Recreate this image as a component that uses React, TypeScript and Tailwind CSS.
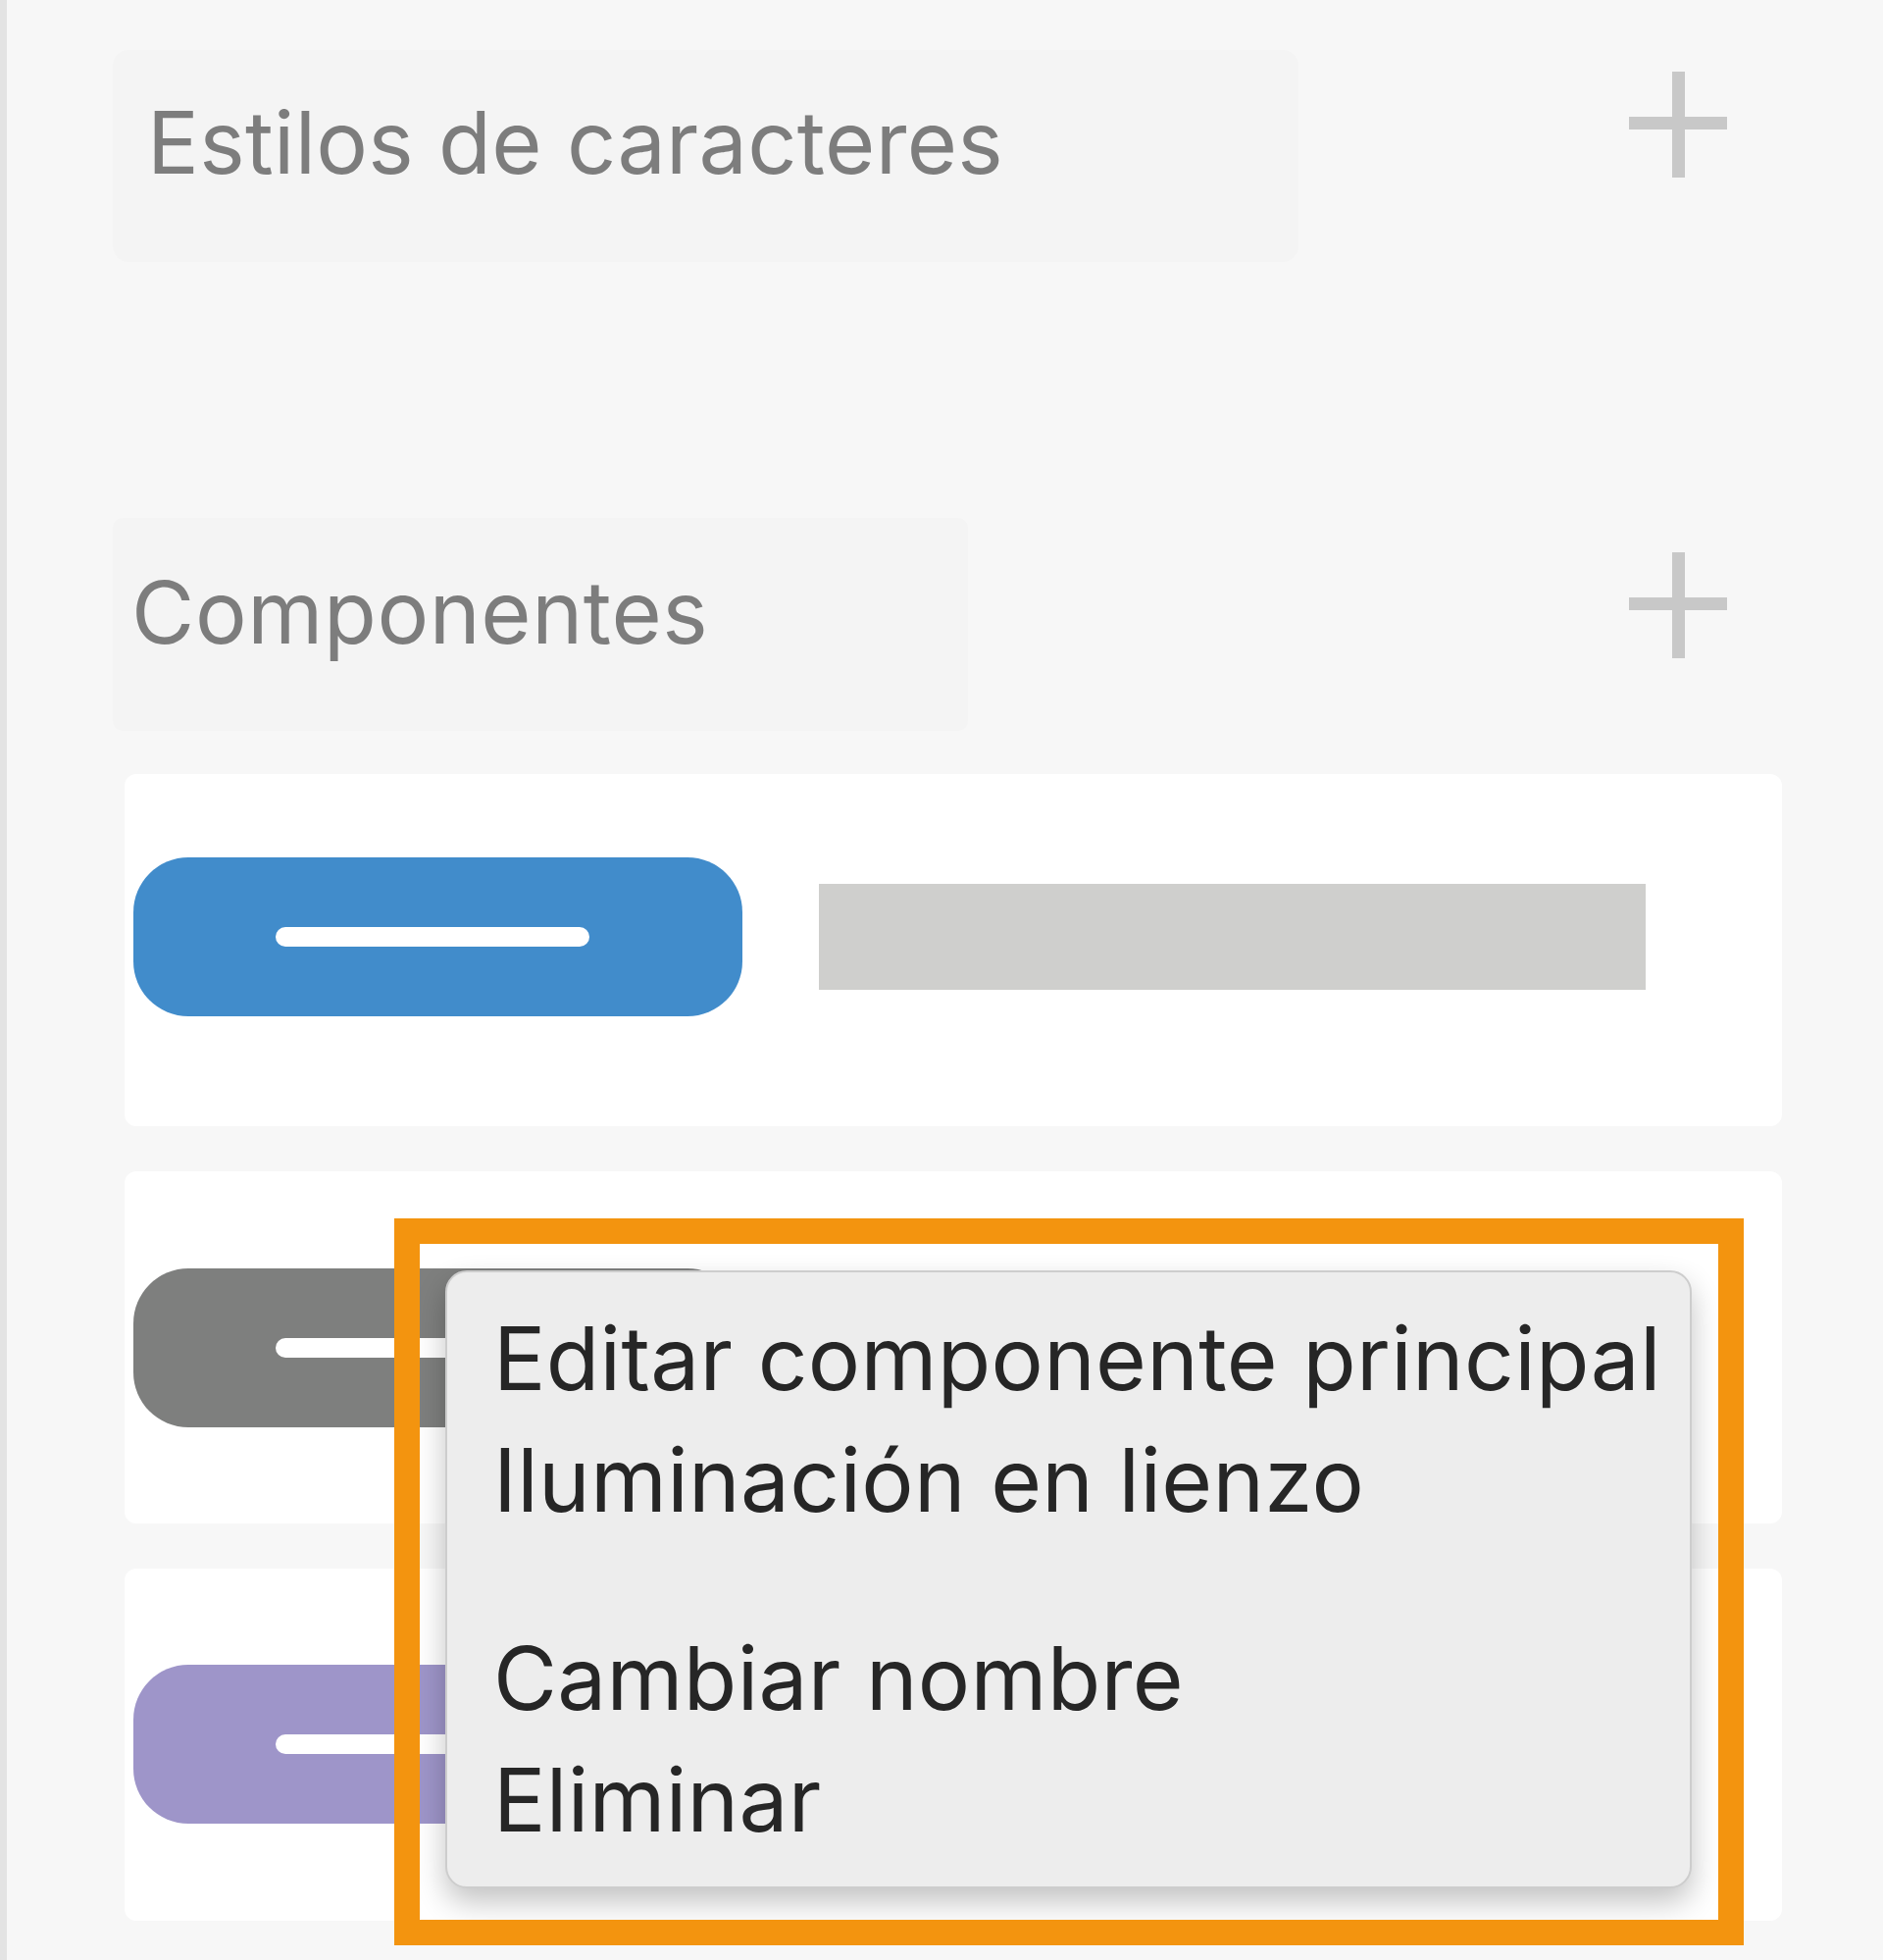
import React from 'react';

// Panel lateral de estilos con menú contextual abierto sobre un componente

const Plus = () => (
  <svg width="100" height="108" viewBox="0 0 100 108" className="shrink-0">
    <rect x="44" y="0" width="13" height="108" fill="#c8c8c8" />
    <rect x="0" y="46" width="100" height="13" fill="#c8c8c8" />
  </svg>
);

interface ComponentCardProps {
  color: string;
  padTop: string;
  showLabel?: boolean;
}

const ComponentCard = ({ color, padTop, showLabel }: ComponentCardProps) => (
  <div className={`flex items-start h-[359px] bg-white rounded-[12px] pl-[9px] ${padTop}`}>
    <div className={`flex items-center justify-center w-[621px] h-[162px] rounded-[56px] shrink-0 ${color}`}>
      <div className="w-[320px] h-[20px] rounded-full bg-white -ml-[12px]" />
    </div>
    {showLabel && <div className="ml-[78px] mt-[27px] w-[843px] h-[108px] bg-[#cfcfcd]" />}
  </div>
);

const menuItems = [
  { label: 'Editar componente principal' },
  { label: 'Iluminación en lienzo', separatorAfter: true },
  { label: 'Cambiar nombre' },
  { label: 'Eliminar' },
];

const App = () => {
  return (
    <div
      className="relative w-[1920px] h-[1998px] overflow-hidden bg-[#f7f7f7] border-l-[7px] border-[#e3e3e3]"
      style={{ fontFamily: 'Inter, "Noto Sans", sans-serif' }}
    >
      <div className="pt-[40px] pl-[108px] pr-[103px]">
        {/* Estilos de caracteres */}
        <div className="flex items-start justify-between h-[227px]">
          <div className="w-[1209px] h-[216px] mt-[11px] rounded-[16px] bg-[#f4f4f4] pl-[35px] pt-[50px]">
            <span className="block text-[88px] leading-none text-[#7d7d7d] tracking-[0.3px]">Estilos de caracteres</span>
          </div>
          <div className="mt-[33px] mr-[56px]">
            <Plus />
          </div>
        </div>

        {/* Componentes */}
        <div className="flex items-start justify-between h-[217px] mt-[261px]">
          <div className="w-[872px] h-[217px] rounded-[10px] bg-[#f4f4f4] pl-[19px] pt-[52px]">
            <span className="block text-[88px] leading-none text-[#7d7d7d] tracking-[0.6px]">Componentes</span>
          </div>
          <div className="mt-[35px] mr-[56px]">
            <Plus />
          </div>
        </div>

        <div className="ml-[12px] mt-[44px] flex flex-col gap-[46px]">
          <ComponentCard color="bg-[#418ccb]" padTop="pt-[85px]" showLabel />
          <ComponentCard color="bg-[#7e7f7e]" padTop="pt-[99px]" />
          <ComponentCard color="bg-[#9e95c9]" padTop="pt-[98px]" />
        </div>
      </div>

      {/* Menú contextual */}
      <div className="absolute left-[447px] top-[1295px] w-[1271px] h-[630px] rounded-[22px] border-2 border-[#cdcdcd] bg-[#ededed] shadow-[0_14px_30px_rgba(0,0,0,0.24)] pt-[26px] pl-[47px]">
        {menuItems.map((item) => (
          <div key={item.label} className={item.separatorAfter ? 'mb-[78px]' : ''}>
            <span className="block text-[89px] leading-[124px] text-[#262626] tracking-[0.3px] whitespace-nowrap">
              {item.label}
            </span>
          </div>
        ))}
      </div>

      {/* Marco de resaltado */}
      <div className="absolute left-[395px] top-[1242px] w-[1376px] h-[741px] border-[26px] border-[#f3940f] pointer-events-none" />
    </div>
  );
};

export default App;
